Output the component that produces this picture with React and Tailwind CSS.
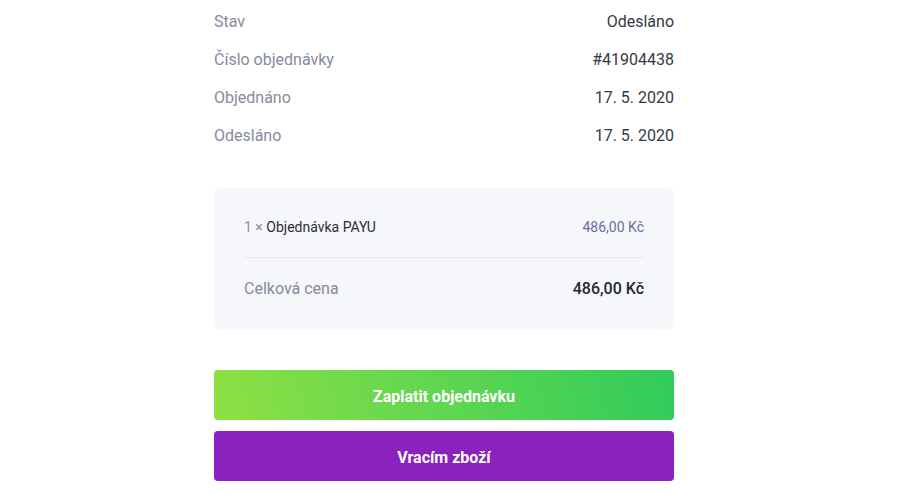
const rows = [
  ['Stav', 'Odesláno'],
  ['Číslo objednávky', '#41904438'],
  ['Objednáno', '17. 5. 2020'],
  ['Odesláno', '17. 5. 2020'],
]

export default function App() {
  return (
    <div className="min-h-[494px] bg-white font-['Roboto',sans-serif]">
      <div className="ml-[214px] w-[460px] pt-[3px]">
        {/* Order info */}
        <div>
          {rows.map(([label, value]) => (
            <div key={label} className="flex h-[38px] items-center justify-between text-[16px]">
              <span className="text-[#868b9c]">{label}</span>
              <span className="text-[#363842]">{value}</span>
            </div>
          ))}
        </div>

        {/* Summary */}
        <div className="mt-[33px] rounded-[6px] bg-[#f6f7fb] px-[30px] pt-[28px] pb-[29px]">
          <div className="flex h-[22px] items-center justify-between text-[14px]">
            <span>
              <span className="text-[#8a8fa0]">1 × </span>
              <span className="text-[#2c2e36]">Objednávka PAYU</span>
            </span>
            <span className="text-[#6a6e9e]">486,00 Kč</span>
          </div>
          <div className="mt-[19px] h-px bg-[#e7e9ef]" />
          <div className="mt-[19px] flex h-[24px] items-center justify-between text-[16px]">
            <span className="text-[#868b9c]">Celková cena</span>
            <span className="font-medium text-[#25272e]">486,00 Kč</span>
          </div>
        </div>

        {/* Actions */}
        <div className="mt-[40px] flex flex-col gap-[11px]">
          <button className="flex h-[50px] w-full items-center justify-center rounded-[4px] bg-[linear-gradient(75deg,#8fe043,#2fcc5c)] pt-[3px] text-[16px] font-bold text-white">
            Zaplatit objednávku
          </button>
          <button className="flex h-[50px] w-full items-center justify-center rounded-[4px] bg-[#8a22bd] pt-[3px] text-[16px] font-bold text-white">
            Vracím zboží
          </button>
        </div>
      </div>
    </div>
  )
}
